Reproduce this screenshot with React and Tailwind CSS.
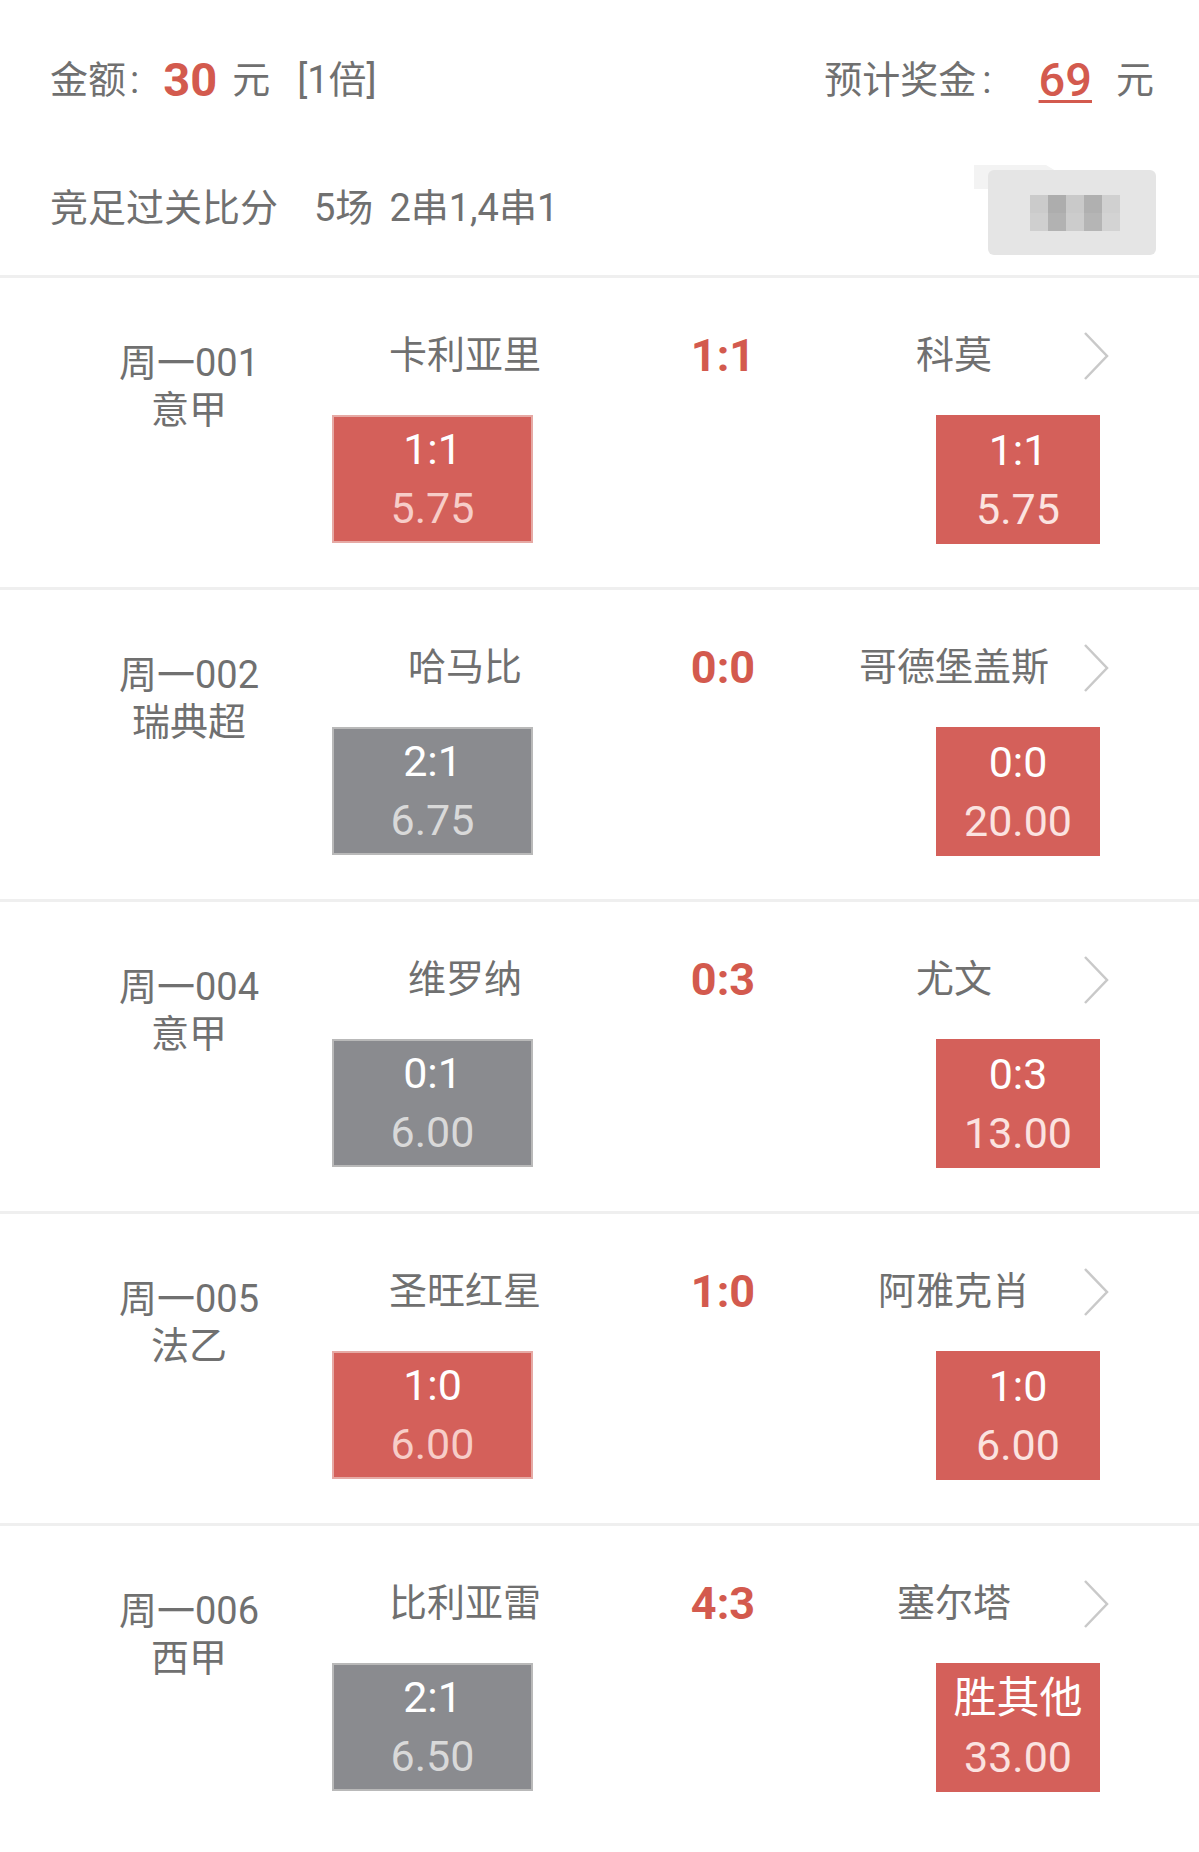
const rows = [
  { id: "周一001", league: "意甲", home: "卡利亚里", score: "1:1", away: "科莫", left: { s: "1:1", o: "5.75", hit: true }, right: { s: "1:1", o: "5.75" } },
  { id: "周一002", league: "瑞典超", home: "哈马比", score: "0:0", away: "哥德堡盖斯", left: { s: "2:1", o: "6.75", hit: false }, right: { s: "0:0", o: "20.00" } },
  { id: "周一004", league: "意甲", home: "维罗纳", score: "0:3", away: "尤文", left: { s: "0:1", o: "6.00", hit: false }, right: { s: "0:3", o: "13.00" } },
  { id: "周一005", league: "法乙", home: "圣旺红星", score: "1:0", away: "阿雅克肖", left: { s: "1:0", o: "6.00", hit: true }, right: { s: "1:0", o: "6.00" } },
  { id: "周一006", league: "西甲", home: "比利亚雷", score: "4:3", away: "塞尔塔", left: { s: "2:1", o: "6.50", hit: false }, right: { s: "胜其他", o: "33.00" } },
];

const Chevron = () => (
  <svg width="28" height="52" viewBox="0 0 28 52" fill="none">
    <polyline points="3,3 25,26 3,49" stroke="#c9c9c9" strokeWidth="2.5" strokeLinejoin="miter" />
  </svg>
);

// blurred / pixelated stamp at the top right
const BlurBadge = () => (
  <svg width="196" height="100" viewBox="0 0 196 100">
    <path d="M14 10 L86 10 L116 28 L40 34 L14 34 Z" fill="#f3f3f3" />
    <rect x="28" y="15" width="168" height="85" rx="6" fill="#e5e5e5" />
    <rect x="70" y="40" width="18" height="18" fill="#cbcbcb" />
    <rect x="88" y="40" width="18" height="18" fill="#adadad" />
    <rect x="106" y="40" width="18" height="18" fill="#c9c9c9" />
    <rect x="124" y="40" width="18" height="18" fill="#b0b0b0" />
    <rect x="142" y="40" width="18" height="18" fill="#d0d0d0" />
    <rect x="70" y="58" width="18" height="18" fill="#cfcfcf" />
    <rect x="88" y="58" width="18" height="18" fill="#b2b2b2" />
    <rect x="106" y="58" width="18" height="18" fill="#cccccc" />
    <rect x="124" y="58" width="18" height="18" fill="#b5b5b5" />
    <rect x="142" y="58" width="18" height="18" fill="#d3d3d3" />
  </svg>
);

function Row({ r }) {
  return (
    <div className="flex h-[312px] border-t-[3px] border-[#efefef]">
      {/* league column */}
      <div className="w-[332px] shrink-0 pl-[46px] pt-[62px] text-center text-[38px] leading-[47px] text-[#707070]">
        <div>{r.id}</div>
        <div>{r.league}</div>
      </div>

      <div className="flex-1 pt-[54px]">
        <div className="flex h-[47px] items-center text-[38px] leading-[47px] text-[#707070]">
          <div className="w-[266px] text-center">{r.home}</div>
          <div className="w-[250px] text-center text-[45px] font-bold text-[#d35a4e]">{r.score}</div>
          <div className="w-[212px] text-center">{r.away}</div>
          <div className="ml-[22px] flex items-center">
            <Chevron />
          </div>
        </div>

        <div className="mt-[36px] flex">
          <div
            className={
              r.left.hit
                ? "flex h-[128px] w-[201px] flex-col items-center justify-center border-2 border-[#e6aaa5] bg-[#d4605a] text-[43px] leading-[59px]"
                : "flex h-[128px] w-[201px] flex-col items-center justify-center border-2 border-[#b9b9b9] bg-[#8a8b8f] text-[43px] leading-[59px]"
            }
          >
            <div className="text-white">{r.left.s}</div>
            <div className={r.left.hit ? "text-[#f7cdc8]" : "text-[#d9d9d9]"}>{r.left.o}</div>
          </div>
          <div className="ml-[403px] flex h-[129px] w-[164px] flex-col items-center justify-center bg-[#d4605a] text-[43px] leading-[59px]">
            <div className="text-white">{r.right.s}</div>
            <div className="text-[#fbe3e0]">{r.right.o}</div>
          </div>
        </div>
      </div>
    </div>
  );
}

export default function App() {
  return (
    <div className="min-h-[1852px] w-[1199px] bg-white font-[Roboto,'Noto_Sans_CJK_SC',sans-serif]">
      {/* header */}
      <div className="h-[275px] pl-[50px] pr-[45px] pt-[52px] text-[38px] text-[#707070]">
        <div className="flex h-[56px] items-center justify-between">
          <div className="flex items-center">
            <span>金额</span>
            <span className="ml-[4px] mr-[24px]">:</span>
            <span className="text-[47px] font-bold text-[#d35a4e]">30</span>
            <span className="ml-[15px]">元</span>
            <span className="ml-[27px]">[1倍]</span>
          </div>
          <div className="flex items-center">
            <span>预计奖金</span>
            <span className="ml-[6px] mr-[47px]">:</span>
            <span className="text-[47px] font-medium leading-[50px] text-[#d35a4e] underline decoration-[3px] underline-offset-[4px]">69</span>
            <span className="ml-[24px]">元</span>
          </div>
        </div>
        <div className="mt-[58px] flex h-[85px] items-center justify-between">
          <div className="flex items-center">
            <span>竞足过关比分</span>
            <span className="ml-[36px]">5场</span>
            <span className="ml-[16px]">2串1,4串1</span>
          </div>
          <div className="-mr-[2px] -mt-[8px]">
            <BlurBadge />
          </div>
        </div>
      </div>

      {rows.map((r) => (
        <Row key={r.id} r={r} />
      ))}
    </div>
  );
}
